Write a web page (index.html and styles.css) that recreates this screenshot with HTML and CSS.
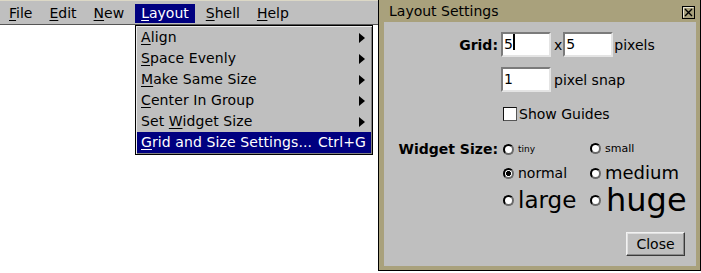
FILE: index.html
```html
<!DOCTYPE html>
<html>
<head>
<meta charset="utf-8">
<title>Layout Settings</title>
<link rel="stylesheet" href="styles.css">
</head>
<body>
<div class="app">
  <div class="menubar">
    <span class="mb-item"><u>F</u>ile</span>
    <span class="mb-item"><u>E</u>dit</span>
    <span class="mb-item"><u>N</u>ew</span>
    <span class="mb-item active"><u>L</u>ayout</span>
    <span class="mb-item"><u>S</u>hell</span>
    <span class="mb-item"><u>H</u>elp</span>
  </div>
  <div class="menu">
    <div class="mi"><span><u>A</u>lign</span><i class="arrow"></i></div>
    <div class="mi"><span><u>S</u>pace Evenly</span><i class="arrow"></i></div>
    <div class="mi"><span><u>M</u>ake Same Size</span><i class="arrow"></i></div>
    <div class="mi"><span><u>C</u>enter In Group</span><i class="arrow"></i></div>
    <div class="mi"><span>Set <u>W</u>idget Size</span><i class="arrow"></i></div>
    <div class="mi sel"><span><u>G</u>rid and Size Settings...</span><span class="accel">Ctrl+G</span></div>
  </div>
</div>

<div class="dialog">
  <div class="titlebar">
    <span class="title">Layout Settings</span>
    <svg class="xbox" width="13" height="13" viewBox="0 0 13 13">
      <rect x="0.5" y="0.5" width="12" height="12" fill="none" stroke="#000"/>
      <path d="M1.5 11.5 V1.5 H11.5" fill="none" stroke="#ebe7d6"/>
      <path d="M3 3 L10 10 M10 3 L3 10" stroke="#000" stroke-width="1.4"/>
    </svg>
  </div>
  <div class="body">
    <div class="row row-grid">
      <span class="label">Grid:</span>
      <div class="fields">
        <span class="entry">5<span class="caret"></span></span>
        <span class="times">x</span>
        <span class="entry e2">5</span>
        <span class="unit">pixels</span>
      </div>
    </div>
    <div class="row row-snap">
      <span></span>
      <div class="fields">
        <span class="entry">1</span>
        <span class="snap">pixel snap</span>
      </div>
    </div>
    <div class="row row-check">
      <span></span>
      <div class="fields">
        <span class="checkbox"></span>
        <span class="check-label">Show Guides</span>
      </div>
    </div>
    <div class="sizes">
      <span class="label wl">Widget Size:</span>
      <span class="radio s-tiny"><i></i>tiny</span>
      <span class="radio s-small"><i></i>small</span>
      <span class="radio on s-normal"><i></i>normal</span>
      <span class="radio s-medium"><i></i>medium</span>
      <span class="radio s-large"><i></i>large</span>
      <span class="radio s-huge"><i></i>huge</span>
    </div>
    <button class="btn">Close</button>
  </div>
</div>
</body>
</html>
```

FILE: styles.css
```css
html, body {
  margin: 0;
  padding: 0;
  background: #ffffff;
}
body {
  width: 701px;
  height: 273px;
  overflow: hidden;
  position: relative;
  font-family: "DejaVu Sans", "Liberation Sans", sans-serif;
  font-size: 14px;
  color: #000;
}
u {
  text-decoration: underline;
  text-decoration-thickness: 1px;
  text-underline-offset: 2px;
}

/* menubar */
.menubar {
  display: flex;
  gap: 5px;
  height: 25px;
  box-sizing: border-box;
  padding: 3px 0 1px 3px;
  background: #bfbfbf;
  border-top: 1px solid #dcd8c6;
  border-bottom: 1px solid #555;
}
.mb-item {
  padding: 0 6px;
  line-height: 19px;
  height: 19px;
}
.mb-item.active {
  background: #000080;
  color: #fff;
}

/* dropdown */
.menu {
  position: absolute;
  left: 135px;
  top: 25px;
  width: 238px;
  box-sizing: border-box;
  padding: 1px;
  background: #bfbfbf;
  border: 1px solid #000;
  box-shadow: inset 1px 1px 0 #ececec, inset -1px -1px 0 #808080;
}
.mi {
  height: 21px;
  line-height: 21px;
  display: flex;
  align-items: center;
  justify-content: space-between;
  padding: 0 6px 0 4px;
  letter-spacing: 0.1px;
}
.mi.sel {
  background: #000080;
  color: #fff;
  padding-right: 5px;
}
.arrow {
  width: 0;
  height: 0;
  border-left: 6px solid #000;
  border-top: 5px solid transparent;
  border-bottom: 5px solid transparent;
}

/* dialog window */
.dialog {
  position: absolute;
  left: 378px;
  top: 0;
  width: 323px;
  height: 271px;
  box-sizing: border-box;
  border: 1px solid #000;
  border-top: 0;
  background: #a9a17c;
  padding: 0 4px 4px 5px;
  display: flex;
  flex-direction: column;
}
.titlebar {
  height: 22px;
  display: flex;
  justify-content: space-between;
  align-items: flex-start;
  padding: 0 1px 0 5px;
}
.title {
  line-height: 21px;
  padding-top: 1px;
}
.xbox {
  margin-top: 6px;
  display: block;
}
.body {
  flex: 1;
  background: #bfbfbf;
  display: flex;
  flex-direction: column;
  padding-top: 10px;
}
.row {
  display: grid;
  grid-template-columns: 114px auto;
  column-gap: 3px;
  align-items: center;
}
.label {
  text-align: right;
  font-weight: bold;
  white-space: nowrap;
}
.fields {
  display: flex;
  align-items: center;
}
.row-grid { height: 25px; }
.row-snap { height: 25px; margin-top: 10px; }
.row-check { height: 21px; margin-top: 11px; }

.entry {
  width: 50px;
  height: 25px;
  box-sizing: border-box;
  background: #fff;
  border: 2px solid;
  border-color: #7b7b7b #e4e4e4 #e4e4e4 #7b7b7b;
  padding-left: 1px;
  line-height: 21px;
  white-space: nowrap;
}
.caret {
  display: inline-block;
  width: 2px;
  height: 16px;
  background: #000;
  vertical-align: -1px;
}
.times { margin-left: 3px; margin-right: 1px; }
.unit { margin-left: 1px; }
.snap { margin-left: 3px; }

.checkbox {
  width: 14px;
  height: 14px;
  box-sizing: border-box;
  margin-left: 2px;
  background: #fff;
  border: 1px solid;
  border-color: #111 #555 #555 #111;
}
.check-label { margin-left: 2px; }

/* widget sizes */
.sizes {
  margin-top: 13px;
  display: grid;
  grid-template-columns: 114px 82px auto;
  grid-template-rows: 24px 24px 30px;
  column-gap: 5px;
  align-items: center;
}
.wl { grid-column: 1; grid-row: 1; }
.radio {
  display: flex;
  align-items: center;
  white-space: nowrap;
  line-height: 1.15;
}
.radio i {
  flex: none;
  width: 11px;
  height: 11px;
  box-sizing: border-box;
  border-radius: 50%;
  border: 2px solid;
  border-color: #000 #6a6a6a #6a6a6a #000;
  background: #fff;
  margin-right: 4px;
}
.radio.on i {
  background: radial-gradient(circle, #000 0 2.2px, #fff 2.8px);
}
.s-tiny { grid-column: 2; grid-row: 1; font-size: 9px; }
.s-small { grid-column: 3; grid-row: 1; font-size: 11px; }
.s-normal { grid-column: 2; grid-row: 2; font-size: 14px; }
.s-medium { grid-column: 3; grid-row: 2; font-size: 18px; }
.s-large { grid-column: 2; grid-row: 3; font-size: 23px; }
.s-huge { grid-column: 3; grid-row: 3; font-size: 32px; }
.s-huge i { margin-right: 5px; }

.btn {
  align-self: flex-end;
  margin-top: 17px;
  margin-right: 11px;
  width: 59px;
  height: 24px;
  box-sizing: border-box;
  padding: 0;
  font-family: "DejaVu Sans", "Liberation Sans", sans-serif;
  font-size: 14px;
  color: #000;
  background: #bfbfbf;
  border: 1px solid;
  border-color: #f2f2f2 #3a3a3a #3a3a3a #f2f2f2;
  box-shadow: inset -1px -1px 0 #8a8a8a, inset 1px 1px 0 #e0e0e0;
}
```
